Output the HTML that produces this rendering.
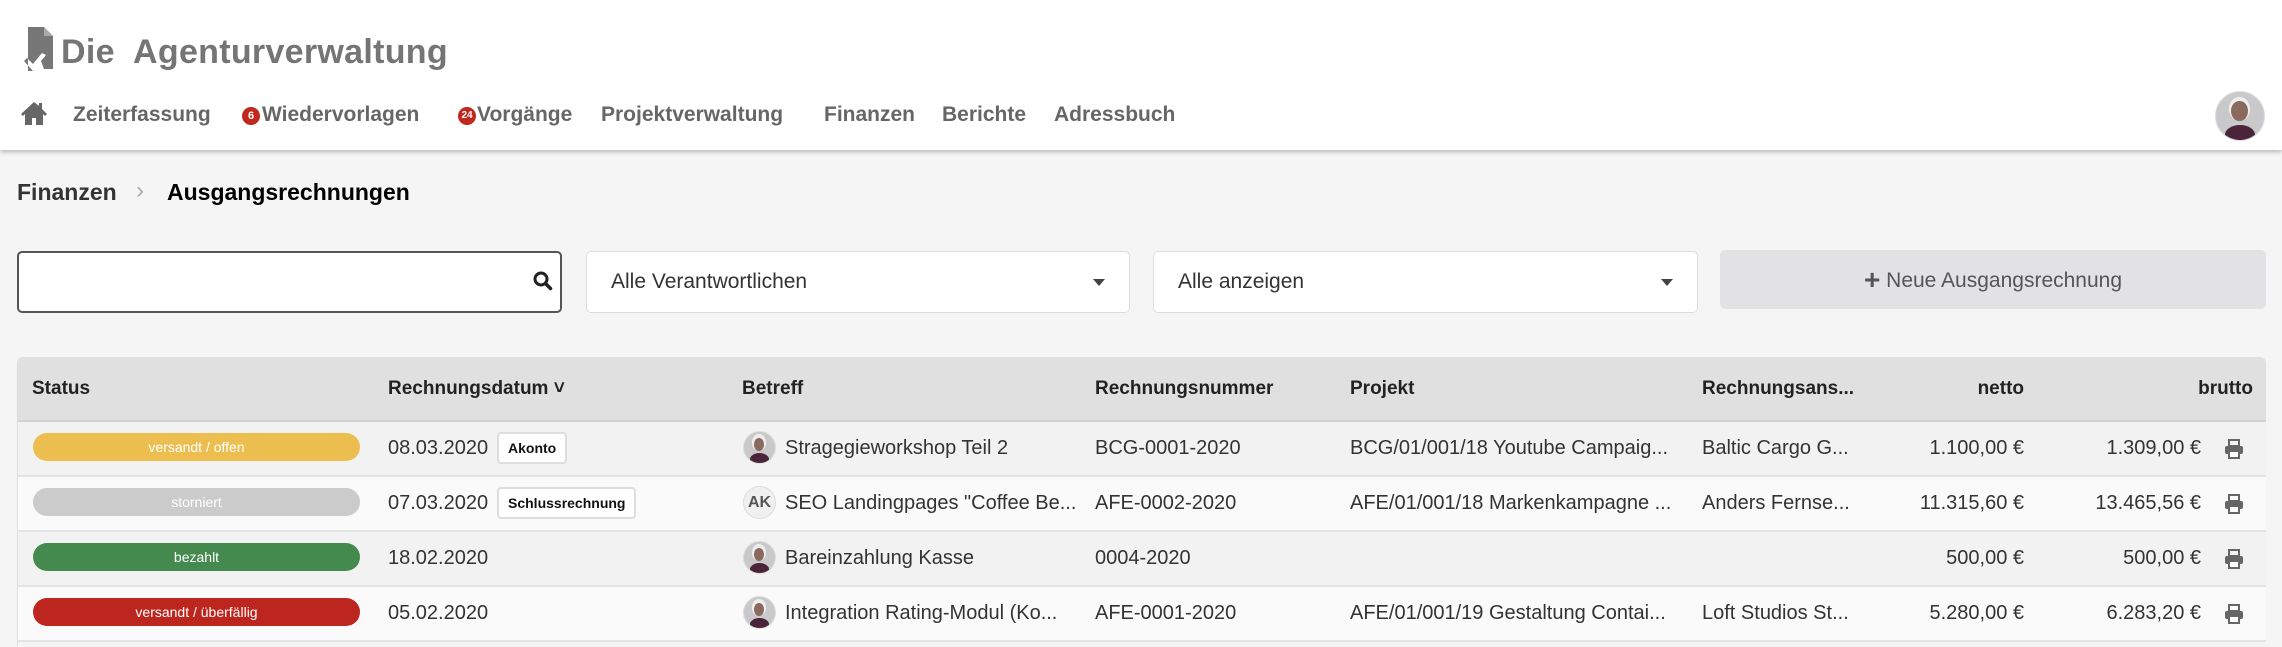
<!DOCTYPE html>
<html><head><meta charset="utf-8"><style>
*{box-sizing:border-box;margin:0;padding:0}
body{width:2282px;height:642px;overflow:hidden;background:#f5f5f5;font-family:"Liberation Sans",sans-serif;position:relative;color:#333}
.abs{position:absolute;white-space:nowrap}
.hdr{position:absolute;left:0;top:0;width:2282px;height:150px;background:#fff;box-shadow:0 2px 4px rgba(0,0,0,.25)}
.nav{font-size:21px;font-weight:bold;color:#666;top:103px}
.badge{position:absolute;width:18px;height:18px;border-radius:50%;background:#c0281e;color:#fff;font-size:11px;font-weight:bold;text-align:center;line-height:18px;top:107px}
.box{position:absolute;background:#fff;border:1px solid #ddd;border-radius:5px;height:62px;top:251px;font-size:21px;color:#333;padding-left:24px;line-height:60px}
.caret{position:absolute;right:24px;top:27px;width:0;height:0;border-left:6px solid transparent;border-right:6px solid transparent;border-top:7px solid #444}
.table{position:absolute;left:17px;top:357px;width:2249px;height:290px;border-radius:6px 6px 0 0;overflow:hidden;border-left:1px solid #ddd}
.th{position:absolute;left:0;top:0;width:100%;height:65px;background:#e0e0e0;border-bottom:2px solid #d2d2d2}
.th span{position:absolute;top:21px;font-size:19px;font-weight:bold;color:#222}
.row{position:absolute;left:0;width:100%;height:55px;border-bottom:2px solid #e4e4e4}
.row span{position:absolute;font-size:20px;color:#333;top:15px}
.pill{position:absolute;left:15px;top:11px;width:327px;height:28px;border-radius:14px;color:#fff;font-size:14px;text-align:center;line-height:28px}
.tag{position:absolute;top:10px!important;height:32px;border:2px solid #ddd;border-radius:4px;background:#fff;font-size:14px!important;font-weight:bold;color:#111!important;padding:0 9px;line-height:28px}
.av{position:absolute;left:725px;top:9px;width:33px;height:33px;border-radius:50%;background:#c9c9cb;overflow:hidden;border:1px solid #ddd}
.av.p:before{content:"";position:absolute;left:32%;top:18%;width:34%;height:42%;border-radius:50%;background:#8a6a5e;box-shadow:0 -2px 0 2px #eee}
.av.p:after{content:"";position:absolute;left:18%;top:68%;width:64%;height:42%;border-radius:50%;background:#4a2438}
.ak{background:#f0f0f0;font-size:16px;color:#555;text-align:center;line-height:31px;font-weight:bold}
</style></head><body>
<div class="hdr"></div>
<svg class="abs" style="left:20px;top:27px" width="40" height="44" viewBox="0 0 40 44"><path d="M8 0h16l9 9v33H24l-3-8 5-6-4-2-9 11-6-6-3 3 9 10H8z" fill="#777"/><path d="M24 0v9h9" fill="#aaa"/></svg>
<div class="abs" style="left:61px;top:33px;font-size:34px;font-weight:bold;color:#757575;letter-spacing:0.3px">Die&nbsp; Agenturverwaltung</div>
<svg class="abs" style="left:20px;top:101px" width="28" height="24" viewBox="0 0 28 24"><path d="M14 1L1 13l2 2 2-2v11h7v-7h4v7h7V13l2 2 2-2-5-5V2h-3v3z" fill="#666"/></svg>
<div class="abs nav" style="left:73px">Zeiterfassung</div>
<div class="badge" style="left:242px">6</div>
<div class="abs nav" style="left:262px">Wiedervorlagen</div>
<div class="badge" style="left:458px;font-size:10px">24</div>
<div class="abs nav" style="left:477px">Vorgänge</div>
<div class="abs nav" style="left:601px">Projektverwaltung</div>
<div class="abs nav" style="left:824px">Finanzen</div>
<div class="abs nav" style="left:942px">Berichte</div>
<div class="abs nav" style="left:1054px">Adressbuch</div>
<div class="av p" style="left:2215px;top:91px;width:50px;height:50px"></div>
<div class="abs" style="left:17px;top:179px;font-size:23px;font-weight:bold;color:#333">Finanzen</div>
<div class="abs" style="left:136px;top:177px;font-size:24px;color:#aaa">›</div>
<div class="abs" style="left:167px;top:179px;font-size:23px;font-weight:bold;color:#000">Ausgangsrechnungen</div>
<div class="box" style="left:17px;width:545px;border:2px solid #555"></div>
<svg class="abs" style="left:533px;top:271px" width="20" height="20" viewBox="0 0 20 20"><circle cx="8" cy="8" r="6" fill="none" stroke="#222" stroke-width="3"/><path d="M12.5 12.5l5 5" stroke="#222" stroke-width="3.5" stroke-linecap="round"/></svg>
<div class="box" style="left:586px;width:544px">Alle Verantwortlichen<div class="caret"></div></div>
<div class="box" style="left:1153px;width:545px">Alle anzeigen<div class="caret"></div></div>
<div class="abs" style="left:1720px;top:250px;width:546px;height:59px;background:#e2e2e4;border-radius:5px;text-align:center;line-height:59px;font-size:21px;color:#555"><b style="font-size:28px;vertical-align:-2px">+</b> Neue Ausgangsrechnung</div>
<div class="table">
<div class="th"><span style="left:14px">Status</span><span style="left:370px">Rechnungsdatum ˅</span><span style="left:724px">Betreff</span><span style="left:1077px">Rechnungsnummer</span><span style="left:1332px">Projekt</span><span style="left:1684px">Rechnungsans...</span><span style="right:242px">netto</span><span style="right:13px">brutto</span></div>

<div class="row" style="top:65px;background:#f2f2f2"><div class="pill" style="background:#ecbe50">versandt / offen</div><span style="left:370px">08.03.2020</span><span class="tag" style="left:479px">Akonto</span><div class="av p"></div><span style="left:767px">Stragegieworkshop Teil 2</span><span style="left:1077px">BCG-0001-2020</span><span style="left:1332px">BCG/01/001/18 Youtube Campaig...</span><span style="left:1684px">Baltic Cargo G...</span><span style="right:242px">1.100,00 €</span><span style="right:65px">1.309,00 €</span></div>
<div class="row" style="top:120px;background:#fafafa"><div class="pill" style="background:#cbcbcb">storniert</div><span style="left:370px">07.03.2020</span><span class="tag" style="left:479px">Schlussrechnung</span><div class="av ak">AK</div><span style="left:767px">SEO Landingpages "Coffee Be...</span><span style="left:1077px">AFE-0002-2020</span><span style="left:1332px">AFE/01/001/18 Markenkampagne ...</span><span style="left:1684px">Anders Fernse...</span><span style="right:242px">11.315,60 €</span><span style="right:65px">13.465,56 €</span></div>
<div class="row" style="top:175px;background:#f2f2f2"><div class="pill" style="background:#448a4e">bezahlt</div><span style="left:370px">18.02.2020</span><div class="av p"></div><span style="left:767px">Bareinzahlung Kasse</span><span style="left:1077px">0004-2020</span><span style="right:242px">500,00 €</span><span style="right:65px">500,00 €</span></div>
<div class="row" style="top:230px;background:#fafafa"><div class="pill" style="background:#bd261e">versandt / überfällig</div><span style="left:370px">05.02.2020</span><div class="av p"></div><span style="left:767px">Integration Rating-Modul (Ko...</span><span style="left:1077px">AFE-0001-2020</span><span style="left:1332px">AFE/01/001/19 Gestaltung Contai...</span><span style="left:1684px">Loft Studios St...</span><span style="right:242px">5.280,00 €</span><span style="right:65px">6.283,20 €</span></div>
</div>
<svg width="0" height="0" style="position:absolute"><defs><symbol id="p" viewBox="0 0 20 20"><rect x="5" y="1" width="10" height="6" fill="none" stroke="#666" stroke-width="2"/><rect x="1" y="7" width="18" height="8" rx="2" fill="#666"/><rect x="5" y="12" width="10" height="7" fill="#fff" stroke="#666" stroke-width="2"/></symbol></defs></svg>
<svg class="abs" style="left:2224px;top:439px" width="20" height="20"><use href="#p"/></svg>
<svg class="abs" style="left:2224px;top:494px" width="20" height="20"><use href="#p"/></svg>
<svg class="abs" style="left:2224px;top:549px" width="20" height="20"><use href="#p"/></svg>
<svg class="abs" style="left:2224px;top:604px" width="20" height="20"><use href="#p"/></svg>
</body></html>
